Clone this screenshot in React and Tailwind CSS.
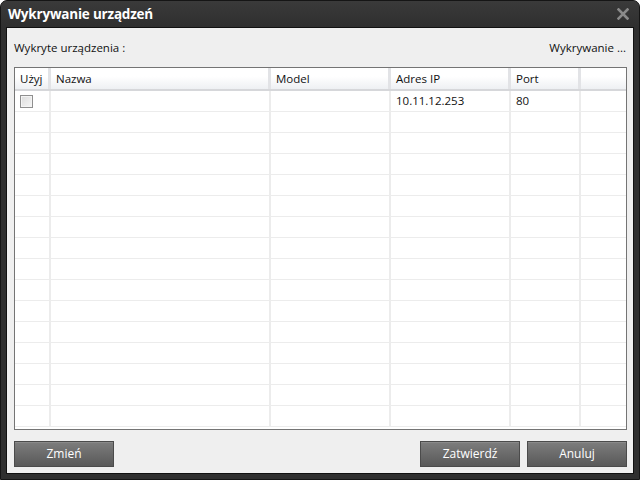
import React from "react";

const cols = [
  { w: "w-[36px]", label: "Użyj" },
  { w: "w-[220px]", label: "Nazwa" },
  { w: "w-[120px]", label: "Model" },
  { w: "w-[120px]", label: "Adres IP" },
  { w: "w-[70px]", label: "Port" },
  { w: "flex-1", label: "" },
];

function Checkbox() {
  return (
    <div className="w-[13px] h-[13px] border border-[#8f8f8f] bg-gradient-to-br from-[#dcdcdc] to-[#f6f6f6] shadow-[inset_0_0_0_1px_#f4f4f4]" />
  );
}

function Btn({ children }) {
  return (
    <div className="w-[100px] h-[26px] border border-[#4b4b4b] bg-gradient-to-b from-[#7d7d7d] to-[#595959] text-white text-[12px] flex items-center justify-center shadow-[inset_0_1px_0_#8a8a8a]">
      {children}
    </div>
  );
}

export default function App() {
  const rows = Array.from({ length: 16 });
  return (
    <div
      className="w-[640px] h-[480px] bg-[#2f2f2f] border border-[#151515] rounded-t-[7px] flex flex-col px-[5px] pb-[5px] text-[#111]"
      style={{ fontFamily: '"Open Sans", "Noto Sans", sans-serif' }}
    >
      <div className="h-[26px] flex items-center justify-between bg-gradient-to-b from-[#3a3a3a] to-[#2f2f2f] -mx-[5px] pl-[7px] pr-[10px] rounded-t-[6px]">
        <span className="text-white font-bold text-[13.5px] tracking-[-0.2px]">Wykrywanie urządzeń</span>
        <svg width="12" height="12" viewBox="0 0 12 12">
          <path d="M1.5 1.5 L10.5 10.5 M10.5 1.5 L1.5 10.5" stroke="#8a8a8a" strokeWidth="2.6" strokeLinecap="square" />
        </svg>
      </div>
      <div className="flex-1 border border-[#111] bg-[#efefef] flex flex-col pl-[7px] pr-[6px]">
        <div className="h-[39px] shrink-0 flex items-center justify-between text-[11.5px] pt-[1px]">
          <span>Wykryte urządzenia :</span>
          <span className="mr-[1px]">Wykrywanie ...</span>
        </div>
        <div className="h-[363px] shrink-0 border border-[#747474] bg-white flex flex-col overflow-hidden">
          <div className="h-[23px] flex bg-gradient-to-b from-white from-40% to-[#eef0f3] border-b-2 border-[#d6d7da] shrink-0">
            {cols.map((c, i) => (
              <div
                key={i}
                className={`${c.w} shrink-0 h-full flex items-center pl-[5px] text-[11.5px] ${i < 5 ? "border-r-[3px] border-[#e2e3e6]" : ""}`}
              >
                {c.label}
              </div>
            ))}
          </div>
          {rows.map((_, r) => (
            <div key={r} className="h-[21px] flex shrink-0 border-b border-[#ececec]">
              {cols.map((c, i) => (
                <div
                  key={i}
                  className={`${c.w} shrink-0 h-full flex items-center pl-[5px] text-[11.5px] ${i < 5 ? "border-r-2 border-[#ececec]" : ""}`}
                >
                  {r === 0 && i === 0 && <Checkbox />}
                  {r === 0 && i === 3 && "10.11.12.253"}
                  {r === 0 && i === 4 && "80"}
                </div>
              ))}
            </div>
          ))}
        </div>
        <div className="flex-1 flex items-start justify-between pt-[11px]">
          <Btn>Zmień</Btn>
          <div className="flex gap-[7px]">
            <Btn>Zatwierdź</Btn>
            <Btn>Anuluj</Btn>
          </div>
        </div>
      </div>
    </div>
  );
}
